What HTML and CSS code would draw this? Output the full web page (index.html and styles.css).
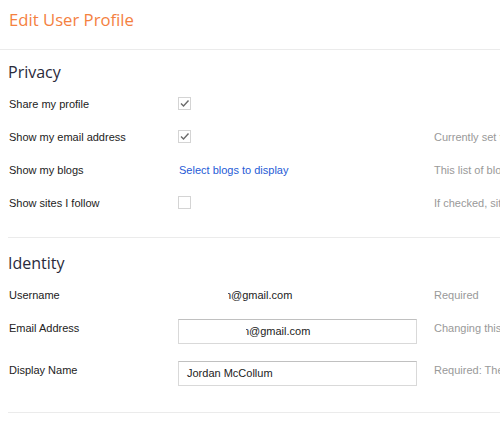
FILE: index.html
```html
<!DOCTYPE html>
<html>
<head>
<meta charset="utf-8">
<link rel="stylesheet" href="styles.css">
</head>
<body>
<div class="page">
  <header class="top">
    <h1 class="title">Edit User Profile</h1>
  </header>
  <section class="section section-privacy">
    <h2 class="section-title">Privacy</h2>
    <div class="rows">
      <div class="row">
        <div class="label">Share my profile</div>
        <div class="field"><span class="check checked"><svg viewBox="0 0 13 13" width="13" height="13"><path d="M3 6.5 L5.5 9 L10.5 3.5" fill="none" stroke="#6b6b6b" stroke-width="1.4"/></svg></span></div>
        <div class="hint"></div>
      </div>
      <div class="row">
        <div class="label">Show my email address</div>
        <div class="field"><span class="check checked"><svg viewBox="0 0 13 13" width="13" height="13"><path d="M3 6.5 L5.5 9 L10.5 3.5" fill="none" stroke="#6b6b6b" stroke-width="1.4"/></svg></span></div>
        <div class="hint">Currently set to jordan@example.com</div>
      </div>
      <div class="row">
        <div class="label">Show my blogs</div>
        <div class="field"><a class="link" href="#">Select blogs to display</a></div>
        <div class="hint">This list of blogs will be shown on your profile</div>
      </div>
      <div class="row">
        <div class="label">Show sites I follow</div>
        <div class="field"><span class="check"></span></div>
        <div class="hint">If checked, sites you follow will be listed</div>
      </div>
    </div>
  </section>
  <section class="section section-identity">
    <h2 class="section-title">Identity</h2>
    <div class="rows">
      <div class="row">
        <div class="label">Username</div>
        <div class="field"><span class="value"><span class="masked"><span class="cut">n</span></span>@gmail.com</span></div>
        <div class="hint">Required</div>
      </div>
      <div class="row row-input">
        <div class="label">Email Address</div>
        <div class="field"><div class="input"><span class="masked"><span class="cut">n</span></span>@gmail.com</div></div>
        <div class="hint">Changing this will change your login email</div>
      </div>
      <div class="row row-input">
        <div class="label">Display Name</div>
        <div class="field"><div class="input input-left">Jordan McCollum</div></div>
        <div class="hint">Required: The name used to sign your posts</div>
      </div>
    </div>
  </section>
</div>
</body>
</html>
```

FILE: styles.css
```css
html, body {
  margin: 0;
  padding: 0;
  background: #fff;
}
body {
  font-family: "Liberation Sans", Arial, sans-serif;
  font-size: 11px;
  color: #222;
  overflow: hidden;
}
.page {
  width: 760px;
}
.top {
  height: 49px;
  border-bottom: 1px solid #ebebeb;
  padding: 0 9px;
}
.title {
  margin: 0;
  padding-top: 8px;
  font-family: "Open Sans", sans-serif;
  font-weight: normal;
  font-size: 16.7px;
  line-height: 24px;
  color: #f4813f;
}
.section {
  margin: 0 8px;
  border-bottom: 1px solid #ebebeb;
}
.section-title {
  margin: 0;
  padding-top: 11px;
  font-family: "Open Sans", sans-serif;
  font-weight: normal;
  font-size: 16px;
  line-height: 22px;
  color: #2a2a3a;
}
.section-identity .section-title {
  padding-top: 14px;
}
.rows {
  padding-top: 4px;
  padding-bottom: 18px;
}
.section-identity .rows {
  padding-top: 4px;
  padding-bottom: 17px;
}
.row {
  display: grid;
  grid-template-columns: 170px 256px 1fr;
  height: 33px;
  align-items: center;
}
.label {
  padding-left: 1px;
  color: #222;
  white-space: nowrap;
}
.hint {
  color: #999;
  white-space: nowrap;
}
.check {
  display: inline-block;
  width: 11px;
  height: 11px;
  border: 1px solid #d4d4d4;
  vertical-align: middle;
  position: relative;
}
.check svg {
  position: absolute;
  left: -1px;
  top: -1px;
}
.link {
  color: #1f5bd6;
  text-decoration: none;
  padding-left: 1px;
}
.value {
  padding-left: 50px;
}
.masked {
  display: inline-block;
  width: 3px;
  overflow: hidden;
  direction: rtl;
  vertical-align: bottom;
}
.cut {
  direction: ltr;
}
.row-input {
  align-items: start;
  height: 42px;
  padding-top: 8px;
  box-sizing: border-box;
}
.row-input .label,
.row-input .hint {
  padding-top: 3px;
}
.input {
  box-sizing: border-box;
  width: 239px;
  height: 25px;
  border: 1px solid #d9d9d9;
  border-top-color: #c0c0c0;
  line-height: 23px;
  padding-left: 67px;
  color: #222;
}
.input-left {
  padding-left: 8px;
}
```
